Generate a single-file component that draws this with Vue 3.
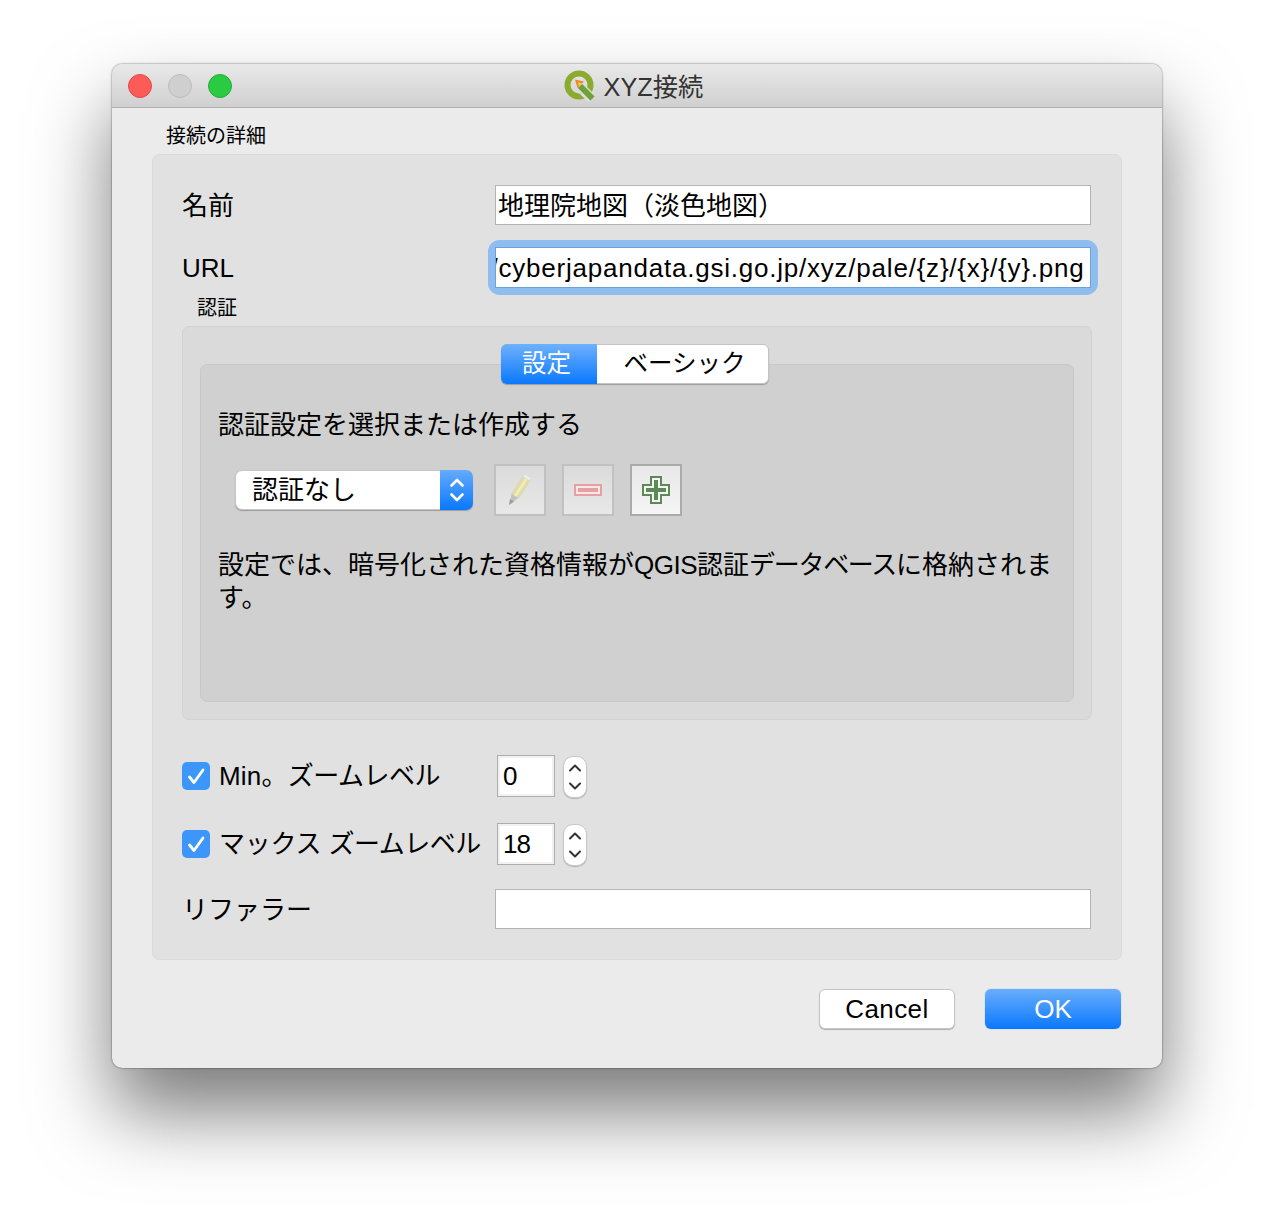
<script setup>
const rows = [
  { prefix: 'Min。', spacing: 'wide', kana: 'ズームレベル', value: '0' },
  { prefix: 'マックス ', spacing: 'snug', kana: 'ズームレベル', value: '18' },
]
</script>

<template>
  <div class="page">
    <div class="window">
      <header class="titlebar">
        <div class="lights">
          <span class="light red"></span>
          <span class="light grey"></span>
          <span class="light green"></span>
        </div>
        <div class="title">
          <svg class="qgis" width="32" height="32" viewBox="0 0 32 32">
            <circle cx="15" cy="15" r="11.500" fill="none" stroke="#8aab2d" stroke-width="6"/>
            <path d="M16 17L28 29" stroke="#dcdcdc" stroke-width="10" fill="none"/>
            <path d="M16 16L28.500 28.500" stroke="#6ea136" stroke-width="6" fill="none"/>
            <path d="M11 9.500l9 2-6.500 6.500z" fill="#ee8a2c"/>
            <path d="M14 12.500l4 .8-3 3z" fill="#f7cf4a"/>
          </svg>
          <span>XYZ接続</span>
        </div>
      </header>

      <main class="content">
        <div class="group-title">接続の詳細</div>
        <section class="details">
          <div class="form-row name-row">
            <label class="row-label cjk">名前</label>
            <div class="text-input">地理院地図（淡色地図）</div>
          </div>
          <div class="form-row url-row">
            <label class="row-label">URL</label>
            <div class="focus-ring">
              <div class="text-input url-input"><span>/cyberjapandata.gsi.go.jp/xyz/pale/{z}/{x}/{y}.png</span></div>
            </div>
          </div>

          <div class="auth-title">認証</div>
          <section class="auth">
            <div class="segments">
              <span class="seg active">設定</span>
              <span class="seg basic">ベーシック</span>
            </div>
            <div class="pane">
              <p class="pane-heading">認証設定を選択または作成する</p>
              <div class="tools">
                <div class="combo">
                  <span class="combo-text">認証なし</span>
                  <span class="combo-arrows">
                    <svg width="16" height="26" viewBox="0 0 16 26" fill="none" stroke="#fff" stroke-width="2.600" stroke-linecap="round" stroke-linejoin="round">
                      <path d="M2.500 8.500L8 3l5.500 5.500"/>
                      <path d="M2.500 17.500L8 23l5.500-5.500"/>
                    </svg>
                  </span>
                </div>
                <button class="tool disabled">
                  <svg width="26" height="34" viewBox="0 0 26 34">
                    <path d="M4.600 21L17.100 1.900l6.800 4.200L11.400 25.100z" fill="#e4dd9f" stroke="#cfcdb0" stroke-width=".6"/>
                    <path d="M7 22.500L19.500 3.500l2 1.200L9 24z" fill="#f0ecc4"/>
                    <path d="M4.600 21l6.800 4.100L2 32z" fill="#c2c2c2"/>
                    <path d="M2 32l1-6 4 2.500z" fill="#9d9d9d"/>
                    <path d="M16 3.600l1.700-2.600 6.800 4.200-1.700 2.600z" fill="#ececec" stroke="#d2d2d2" stroke-width=".5"/>
                  </svg>
                </button>
                <button class="tool disabled">
                  <svg width="28" height="12" viewBox="0 0 28 12">
                    <rect width="28" height="12" fill="#e99ea1"/>
                    <rect x="2" y="2" width="24" height="8" fill="#f4e8e8"/>
                    <rect x="4" y="4" width="20" height="4" fill="#e99ea1"/>
                  </svg>
                </button>
                <button class="tool enabled">
                  <svg width="28" height="28" viewBox="0 0 28 28">
                    <path d="M8 0h12v8h8v12h-8v8H8v-8H0V8h8z" fill="#5b8a56"/>
                    <path d="M10 2h8v8h8v8h-8v8h-8v-8H2v-8h8z" fill="#f6f6f6"/>
                    <path d="M12 4h4v8h8v4h-8v8h-4v-8H4v-4h8z" fill="#5b8a56"/>
                  </svg>
                </button>
              </div>
              <p class="pane-note">設定では、暗号化された資格情報が<span class="tight-latin">QGIS</span>認証<span class="tight-kana">データベース</span>に格納されま<br>す。</p>
            </div>
          </section>

          <div v-for="(row, i) in rows" :key="row.value" class="zoom-row" :class="{ first: i === 0 }">
            <div class="check-label">
              <span class="check">
                <svg width="20" height="20" viewBox="0 0 20 20" fill="none" stroke="#fff" stroke-width="2.800" stroke-linecap="round" stroke-linejoin="round">
                  <path d="M3.500 11l4.500 5.500L17 4"/>
                </svg>
              </span>
              <span class="check-text"><span :class="row.spacing">{{ row.prefix }}</span><span class="snugger">{{ row.kana }}</span></span>
            </div>
            <div class="spin-input">{{ row.value }}</div>
            <div class="stepper">
              <svg width="14" height="30" viewBox="0 0 14 30" fill="none" stroke="#333" stroke-width="2" stroke-linecap="round" stroke-linejoin="round">
                <path d="M2 8.500l5-5 5 5"/>
                <path d="M2 21.500l5 5 5-5"/>
              </svg>
            </div>
          </div>

          <div class="form-row referer-row">
            <label class="row-label cjk">リファラー</label>
            <div class="text-input"></div>
          </div>
        </section>

        <footer class="actions">
          <button class="push cancel">Cancel</button>
          <button class="push ok">OK</button>
        </footer>
      </main>
    </div>
  </div>
</template>

<style>
html, body { margin: 0; background: #fff; overflow: hidden; }
</style>

<style scoped>
.page {
  box-sizing: border-box;
  width: 1274px;
  height: 1228px;
  padding: 64px 112px 0;
  background: #fff;
  font-family: "Liberation Sans", "Noto Sans CJK JP", sans-serif;
  color: #000;
  overflow: hidden;
}
.window {
  width: 1050px;
  height: 1004px;
  border-radius: 10px;
  background: #ebebeb;
  box-shadow: 0 0 2px rgba(0,0,0,.65), 0 44px 78px rgba(0,0,0,.52);
  overflow: hidden;
  display: flex;
  flex-direction: column;
}
.titlebar {
  box-sizing: border-box;
  height: 44px;
  flex: none;
  position: relative;
  display: flex;
  align-items: center;
  justify-content: center;
  background: linear-gradient(#e9e9e9, #d0d0d0);
  border-bottom: 1px solid #b1b1b1;
}
.lights {
  position: absolute;
  left: 16px;
  top: 10px;
  display: flex;
  gap: 16px;
}
.light {
  box-sizing: border-box;
  width: 24px;
  height: 24px;
  border-radius: 50%;
  border: 1px solid;
}
.red { background: #fc5b57; border-color: #e24b46; }
.grey { background: #cfcfcf; border-color: #bcbcbc; }
.green { background: #2acb42; border-color: #22ae37; }
.title {
  display: flex;
  align-items: center;
  gap: 8px;
  font-size: 25.300px;
  color: #333;
  line-height: 30px;
  padding-right: 7px;
}
.title span { padding-top: 2px; }
.qgis { flex: none; margin-top: 1px; }
.content {
  flex: 1;
  display: flex;
  flex-direction: column;
  padding: 0 40px;
}
.group-title {
  font-size: 20px;
  line-height: 28px;
  height: 46px;
  padding: 14px 0 0 14px;
  box-sizing: border-box;
}
.details {
  box-sizing: border-box;
  height: 806px;
  background: #e1e1e1;
  border: 1px solid #dbdbdb;
  border-radius: 7px;
  padding: 30px 29px 0;
}
.form-row {
  display: flex;
  align-items: center;
  height: 40px;
}
.row-label {
  width: 313px;
  flex: none;
  font-size: 26px;
  line-height: 40px;
  color: #000;
}
.row-label.cjk { padding-top: 2px; box-sizing: border-box; }
.text-input {
  box-sizing: border-box;
  width: 596px;
  height: 40px;
  background: #fff;
  border: 1px solid #b4b4b4;
  font-size: 26px;
  line-height: 40px;
  padding-left: 2px;
  white-space: nowrap;
  overflow: hidden;
}
.url-row {
  margin-top: 22px;
  height: 41px;
}
.focus-ring {
  flex: none;
  border-radius: 5px;
  box-shadow: 0 0 0 7px #8fbdf0;
}
.url-input {
  height: 41px;
  display: flex;
  justify-content: flex-end;
  padding: 0 5.500px 0 0;
  border-color: #6f9fdd;
  letter-spacing: .78px;
}
.url-input span { flex: none; }
.auth-title {
  font-size: 20px;
  line-height: 28px;
  height: 38px;
  padding: 6px 0 0 15px;
  box-sizing: border-box;
}
.auth {
  box-sizing: border-box;
  width: 910px;
  height: 394px;
  background: #dadada;
  border: 1px solid #d2d2d2;
  border-radius: 7px;
  padding: 17px 17px 0;
  display: flex;
  flex-direction: column;
  align-items: center;
}
.segments {
  position: relative;
  z-index: 1;
  box-sizing: border-box;
  height: 40px;
  width: 268px;
  margin: 0 4px -20px 0;
  display: flex;
  font-size: 24.500px;
  border-radius: 6px;
  background: #fff;
  border: 1px solid #c4c4c4;
  box-shadow: 0 1px 1px rgba(0,0,0,.25);
  flex: none;
}
.seg {
  flex: 1;
  display: flex;
  align-items: center;
  justify-content: center;
  line-height: 38px;
}
.seg.basic { padding-left: 4px; }
.seg.active {
  flex: none;
  box-sizing: border-box;
  width: 96px;
  padding-right: 5px;
  margin: -1px 0 -1px -1px;
  border-radius: 6px 0 0 6px;
  color: #fff;
  background: linear-gradient(#6eb1fd, #0a78fd);
}
.pane {
  box-sizing: border-box;
  width: 874px;
  height: 338px;
  flex: none;
  background: #d0d0d0;
  border: 1px solid #c8c8c8;
  border-radius: 7px;
  padding: 0 18px 0 17px;
}
.pane p { margin: 0; font-size: 26px; color: #000; white-space: nowrap; }
.pane-heading {
  padding-top: 42px;
  line-height: 36px;
}
.tools {
  display: flex;
  align-items: center;
  gap: 16px;
  margin-top: 21px;
  height: 52px;
  padding-left: 17px;
}
.combo {
  box-sizing: border-box;
  width: 238px;
  height: 40px;
  margin-right: 5px;
  background: #fff;
  border: 1px solid #c6c6c6;
  border-radius: 7px;
  box-shadow: 0 1px 1px rgba(0,0,0,.25);
  display: flex;
}
.combo-text {
  flex: 1;
  font-size: 26px;
  line-height: 38px;
  padding-left: 16px;
  color: #000;
}
.combo-arrows {
  width: 33px;
  flex: none;
  margin: -1px -1px -1px 0;
  border-radius: 0 7px 7px 0;
  display: flex;
  align-items: center;
  justify-content: center;
  background: linear-gradient(#64abfd, #0a78fd);
}
.tool {
  box-sizing: border-box;
  width: 52px;
  height: 52px;
  padding: 0;
  border-radius: 0;
  display: flex;
  align-items: center;
  justify-content: center;
  border: 2px solid;
}
.tool.disabled {
  border-color: #c1c1c1;
  background: linear-gradient(#dbdbdb, #e8e8e8);
}
.tool.enabled {
  border-color: #ababab;
  background: linear-gradient(#e8e8e8, #f5f5f5);
}
.pane p.pane-note {
  margin-top: 33px;
  line-height: 33px;
}
.tight-latin { letter-spacing: -.5px; }
.tight-kana { letter-spacing: -1.300px; }
.zoom-row {
  display: flex;
  align-items: center;
  height: 42px;
  margin-top: 26px;
  font-size: 26px;
  color: #000;
}
.zoom-row.first { margin-top: 35px; }
.check-label {
  width: 315px;
  flex: none;
  display: flex;
  align-items: center;
  gap: 9px;
  white-space: pre;
}
.check-text { padding-bottom: 5px; }
.wide { letter-spacing: .2px; }
.snug { letter-spacing: -.2px; }
.snugger { letter-spacing: -.5px; }
.check {
  width: 28px;
  height: 28px;
  flex: none;
  border-radius: 5px;
  background: #3d97fb;
  display: flex;
  align-items: center;
  justify-content: center;
}
.spin-input {
  box-sizing: border-box;
  width: 58px;
  height: 42px;
  background: #fff;
  border: 1px solid #adadad;
  box-shadow: inset 0 0 0 2px #f1f1f1;
  line-height: 40px;
  padding-left: 5px;
  letter-spacing: -1px;
  color: #000;
}
.stepper {
  box-sizing: border-box;
  width: 24px;
  height: 42px;
  margin-left: 8px;
  margin-top: 1px;
  border-radius: 10px;
  background: #fff;
  border: 1px solid #c8c8c8;
  box-shadow: 0 1px 1px rgba(0,0,0,.2);
  display: flex;
  align-items: center;
  justify-content: center;
}
.referer-row { margin-top: 24px; }
.actions {
  display: flex;
  justify-content: flex-end;
  gap: 30px;
  margin-top: 29px;
  padding-right: 1px;
}
.push {
  box-sizing: border-box;
  width: 136px;
  height: 40px;
  font-family: inherit;
  font-size: 26px;
  padding: 0;
  border: 0;
  border-radius: 6px;
  line-height: 38px;
}
.cancel {
  background: #fff;
  color: #000;
  border: 1px solid #c4c4c4;
  box-shadow: 0 1px 1px rgba(0,0,0,.25);
  letter-spacing: .4px;
}
.ok {
  color: #fff;
  background: linear-gradient(#69aefd, #0a78fd);
  box-shadow: 0 0 1px rgba(0,70,200,.5);
}
</style>
